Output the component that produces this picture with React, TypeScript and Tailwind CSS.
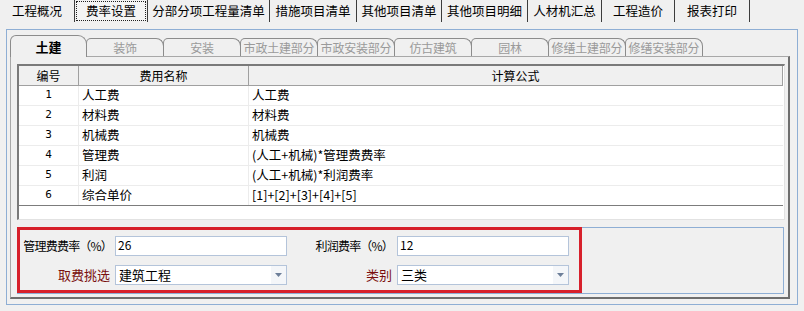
import React from 'react';

const topTabs = [
    { label: '工程概况', w: 'w-[75px]' },
    { label: '费率设置', w: 'w-[73px]', active: true },
    { label: '分部分项工程量清单', w: 'w-[122px]' },
    { label: '措施项目清单', w: 'w-[87px]' },
    { label: '其他项目清单', w: 'w-[85px]' },
    { label: '其他项目明细', w: 'w-[86px]' },
    { label: '人材机汇总', w: 'w-[74px]' },
    { label: '工程造价', w: 'w-[73px]' },
    { label: '报表打印', w: 'w-[75px]' },
];

const subTabs = ['土建', '装饰', '安装', '市政土建部分', '市政安装部分', '仿古建筑', '园林', '修缮土建部分', '修缮安装部分'];

const rows = [
    { no: '1', name: '人工费', formula: '人工费' },
    { no: '2', name: '材料费', formula: '材料费' },
    { no: '3', name: '机械费', formula: '机械费' },
    { no: '4', name: '管理费', formula: '(人工+机械)*管理费费率' },
    { no: '5', name: '利润', formula: '(人工+机械)*利润费率' },
    { no: '6', name: '综合单价', formula: '[1]+[2]+[3]+[4]+[5]' },
];

const font = { fontFamily: '"Noto Sans CJK SC", "Noto Sans", sans-serif' };

const TextBox: React.FC<{ value: string }> = ({ value }) => (
    <div className="w-[172px] h-[20px] bg-white border border-[#b4c4da] pl-[2px] leading-[16px] text-[12px]">{value}</div>
);

const Combo: React.FC<{ value: string }> = ({ value }) => (
    <div className="w-[172px] h-[20px] bg-white border border-[#b4c4da] flex items-center">
        <span className="flex-1 pl-[3px] text-[13px] leading-[18px]">{value}</span>
        <span className="w-[15px] h-[18px] flex items-center justify-center bg-[#f4f6f9]">
            <svg width="7" height="4" viewBox="0 0 7 4"><path d="M0 0h7L3.5 4z" fill="#6d7f99" /></svg>
        </span>
    </div>
);

export default function App() {
    return (
        <div className="w-[804px] h-[311px] bg-[#f0f0f0] overflow-hidden text-[12px] text-black" style={font}>
            {/* top tabs */}
            <div className="flex h-[22px]">
                {topTabs.map(t => (
                    <div key={t.label} className={`${t.w} h-[22px] border-r border-r-[#3c3c3c] flex items-center justify-center p-[1px]`}>
                        <div className={`w-full h-full flex items-center justify-center text-[12.5px] ${t.active ? 'border border-dotted border-[#202020] bg-[#f4f4f4]' : ''}`}>
                            {t.label}
                        </div>
                    </div>
                ))}
            </div>

            {/* outer frame */}
            <div className="mt-[7px] ml-[6px] w-[792px] h-[276px] border border-[#8eaed4] pl-[3px] pt-[5px]">
                {/* sub tabs */}
                <div className="flex items-end h-[21px]">
                    {subTabs.map((s, i) => (
                        i === 0 ? (
                            <div key={s} className="relative z-10 w-[77px] h-[22px] -mb-px bg-[#f0f0f0] border-l border-t border-r border-[#8c8c8c] rounded-tl-[6px] rounded-tr-[9px] flex items-center justify-center font-bold text-[13px]">
                                {s}
                            </div>
                        ) : (
                            <div key={s} className="w-[78px] h-[18px] -ml-px bg-[#f0f0f0] border-l border-t border-r border-[#8c8c8c] rounded-tl-[5px] rounded-tr-[8px] flex items-center justify-center overflow-hidden whitespace-nowrap text-[#9a9a9a] text-[12px] tracking-[-0.2px]">
                                {s}
                            </div>
                        )
                    ))}
                </div>

                {/* panel */}
                <div className="w-[780px] h-[243px] border-l border-t border-[#a8a8a8] border-r-2 border-b-2 border-r-[#6e6e6e] border-b-[#6e6e6e] pl-[6px] pt-[7px]">
                    {/* grid */}
                    <div className="w-[768px] h-[156px] bg-white border-l-2 border-t-2 border-l-[#7a7a7a] border-t-[#7a7a7a] border-r border-b border-r-[#e2e2e2] border-b-[#e2e2e2]">
                        <div className="w-[764px]">
                            <div className="flex h-[20px] bg-[#f0f0f0] border-b border-[#a0a0a0] border-r">
                                <div className="w-[60px] border-r border-[#a0a0a0] flex items-center justify-center">编号</div>
                                <div className="w-[170px] border-r border-[#a0a0a0] flex items-center justify-center">费用名称</div>
                                <div className="flex-1 flex items-center justify-center">计算公式</div>
                            </div>
                            {rows.map((r, i) => (
                                <div key={r.no} className={`flex h-[20px] border-b ${i === rows.length - 1 ? 'border-[#7c7c7c]' : 'border-[#ececec]'}`}>
                                    <div className="w-[60px] border-r border-[#ececec] flex items-center justify-center" style={{ fontFamily: '"DejaVu Sans Mono", monospace', fontSize: '11px' }}>{r.no}</div>
                                    <div className="w-[170px] border-r border-[#ececec] flex items-center pl-[3px] text-[12.5px]">{r.name}</div>
                                    <div className="flex-1 flex items-center pl-[3px] text-[12.5px]">{r.formula}</div>
                                </div>
                            ))}
                        </div>
                    </div>

                    {/* settings group */}
                    <div className="relative mt-[7px] w-[767px] h-[67px] border border-[#8eaed4] pt-[8px] pl-[1px]">
                        <div className="flex flex-col gap-[9px]">
                            <div className="flex items-center">
                                <div className="w-[96px] text-right pr-[3px] text-[12px] tracking-[-0.8px] whitespace-nowrap">管理费费率（%）</div>
                                <TextBox value="26" />
                                <div className="w-[110px] text-right pr-[4px] text-[12px] tracking-[-0.8px] whitespace-nowrap">利润费率（%）</div>
                                <TextBox value="12" />
                            </div>
                            <div className="flex items-center">
                                <div className="w-[96px] text-right pr-[5px] text-[13px] text-[#7a0e0e]">取费挑选</div>
                                <Combo value="建筑工程" />
                                <div className="w-[110px] text-right pr-[5px] text-[13px] text-[#7a0e0e]">类别</div>
                                <Combo value="三类" />
                            </div>
                        </div>
                        {/* red annotation frame */}
                        <div className="absolute left-[-1px] top-[-1px] w-[565px] h-[66px] border-[3px] border-[#d7202b] pointer-events-none" />
                    </div>
                </div>
            </div>
        </div>
    );
}
